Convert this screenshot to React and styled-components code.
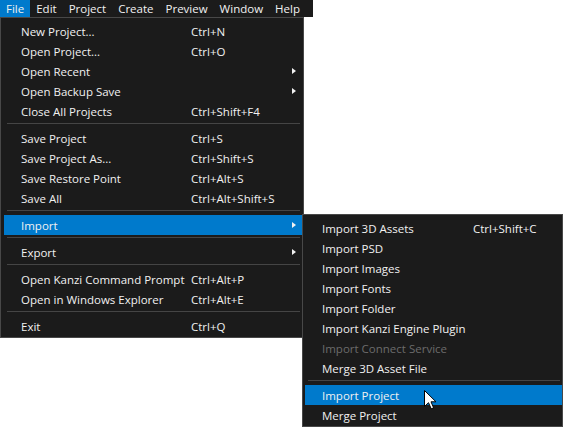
import React from 'react';
import styled, { createGlobalStyle } from 'styled-components';

const Global = createGlobalStyle`
  html, body { margin: 0; padding: 0; background: #ffffff; }
  body { font-family: "Segoe UI", "Open Sans", "Noto Sans", sans-serif; }
`;

const Page = styled.div`
  position: relative;
  width: 564px;
  height: 427px;
  overflow: hidden;
  font-size: 11.5px;
  color: #f1f1f1;
`;

const MenuBar = styled.div`
  display: flex;
  width: 313px;
  height: 17px;
  background: #1b1b1b;
`;

const BarItem = styled.div`
  padding: 0 6px;
  line-height: 17px;
  color: #f1f1f1;
  background: ${(p) => (p.$active ? '#007acc' : 'transparent')};
`;

const Menu = styled.div`
  position: absolute;
  box-sizing: border-box;
  display: flex;
  flex-direction: column;
  width: ${(p) => p.$width}px;
  padding: 3px 0 1px;
  background: #1b1b1b;
  border: 1px solid #484848;
  z-index: ${(p) => p.$z || 1};
`;

const MainMenu = styled(Menu)`
  left: 0;
  top: 17px;
`;

const SubMenu = styled(Menu)`
  left: calc(100% - 1px);
  top: -1px;
`;

const RowWrap = styled.div`
  position: relative;
`;

const Row = styled.div`
  display: grid;
  grid-template-columns: ${(p) => p.$labelWidth}px 1fr 10px;
  align-items: center;
  height: 20px;
  margin: 0 ${(p) => p.$mr}px 0 ${(p) => p.$ml}px;
  padding: 0 6px 0 17px;
  background: ${(p) => (p.$active ? '#007acc' : 'transparent')};
  color: ${(p) => (p.$disabled ? '#6b6b6b' : '#f1f1f1')};
  white-space: nowrap;
`;

const Label = styled.span``;
const Shortcut = styled.span``;

const Arrow = styled.span`
  justify-self: end;
  width: 0;
  height: 0;
  border-left: 4px solid #f1f1f1;
  border-top: 3.5px solid transparent;
  border-bottom: 3.5px solid transparent;
`;

const Separator = styled.div`
  height: 1px;
  margin: 2px ${(p) => p.$mr}px 4px ${(p) => p.$ml}px;
  background: #454545;
`;

const Cursor = styled.svg`
  position: absolute;
  left: 424px;
  top: 390px;
  z-index: 5;
`;

const mainItems = [
  { l: 'New Project...', s: 'Ctrl+N' },
  { l: 'Open Project...', s: 'Ctrl+O' },
  { l: 'Open Recent', sub: true },
  { l: 'Open Backup Save', sub: true },
  { l: 'Close All Projects', s: 'Ctrl+Shift+F4' },
  { sep: true },
  { l: 'Save Project', s: 'Ctrl+S' },
  { l: 'Save Project As...', s: 'Ctrl+Shift+S' },
  { l: 'Save Restore Point', s: 'Ctrl+Alt+S' },
  { l: 'Save All', s: 'Ctrl+Alt+Shift+S' },
  { sep: true },
  { l: 'Import', sub: true, active: true, open: true },
  { sep: true },
  { l: 'Export', sub: true },
  { sep: true },
  { l: 'Open Kanzi Command Prompt', s: 'Ctrl+Alt+P' },
  { l: 'Open in Windows Explorer', s: 'Ctrl+Alt+E' },
  { sep: true },
  { l: 'Exit', s: 'Ctrl+Q' },
];

const subItems = [
  { l: 'Import 3D Assets', s: 'Ctrl+Shift+C' },
  { l: 'Import PSD' },
  { l: 'Import Images' },
  { l: 'Import Fonts' },
  { l: 'Import Folder' },
  { l: 'Import Kanzi Engine Plugin' },
  { l: 'Import Connect Service', disabled: true },
  { l: 'Merge 3D Asset File' },
  { sep: true },
  { l: 'Import Project', active: true },
  { l: 'Merge Project' },
];

function Items({ items, labelWidth, ml, mr, children }) {
  return items.map((it, i) => {
    if (it.sep) return <Separator key={i} $ml={ml + 3} $mr={mr + 2} />;
    const row = (
      <Row
        key={i}
        $labelWidth={labelWidth}
        $ml={ml}
        $mr={mr}
        $active={it.active}
        $disabled={it.disabled}
      >
        <Label>{it.l}</Label>
        <Shortcut>{it.s || ''}</Shortcut>
        {it.sub ? <Arrow /> : <span />}
      </Row>
    );
    if (it.open) {
      return (
        <RowWrap key={i}>
          {row}
          {children}
        </RowWrap>
      );
    }
    return row;
  });
}

export default function App() {
  return (
    <Page>
      <Global />
      <MenuBar>
        <BarItem $active>File</BarItem>
        <BarItem>Edit</BarItem>
        <BarItem>Project</BarItem>
        <BarItem>Create</BarItem>
        <BarItem>Preview</BarItem>
        <BarItem>Window</BarItem>
        <BarItem>Help</BarItem>
      </MenuBar>
      <MainMenu $width={304}>
        <Items items={mainItems} labelWidth={170} ml={3} mr={1}>
          <SubMenu $width={261} $z={2}>
            <Items items={subItems} labelWidth={151} ml={2} mr={0} />
          </SubMenu>
        </Items>
      </MainMenu>
      <Cursor width="13" height="20" viewBox="0 0 13 20">
        <path
          d="M0.5 0.5 L0.5 16.5 L4.5 12.7 L7.2 18.8 L9.6 17.8 L7 11.8 L12 11.8 Z"
          fill="#ffffff"
          stroke="#000000"
          strokeWidth="1"
          strokeLinejoin="miter"
        />
      </Cursor>
    </Page>
  );
}
